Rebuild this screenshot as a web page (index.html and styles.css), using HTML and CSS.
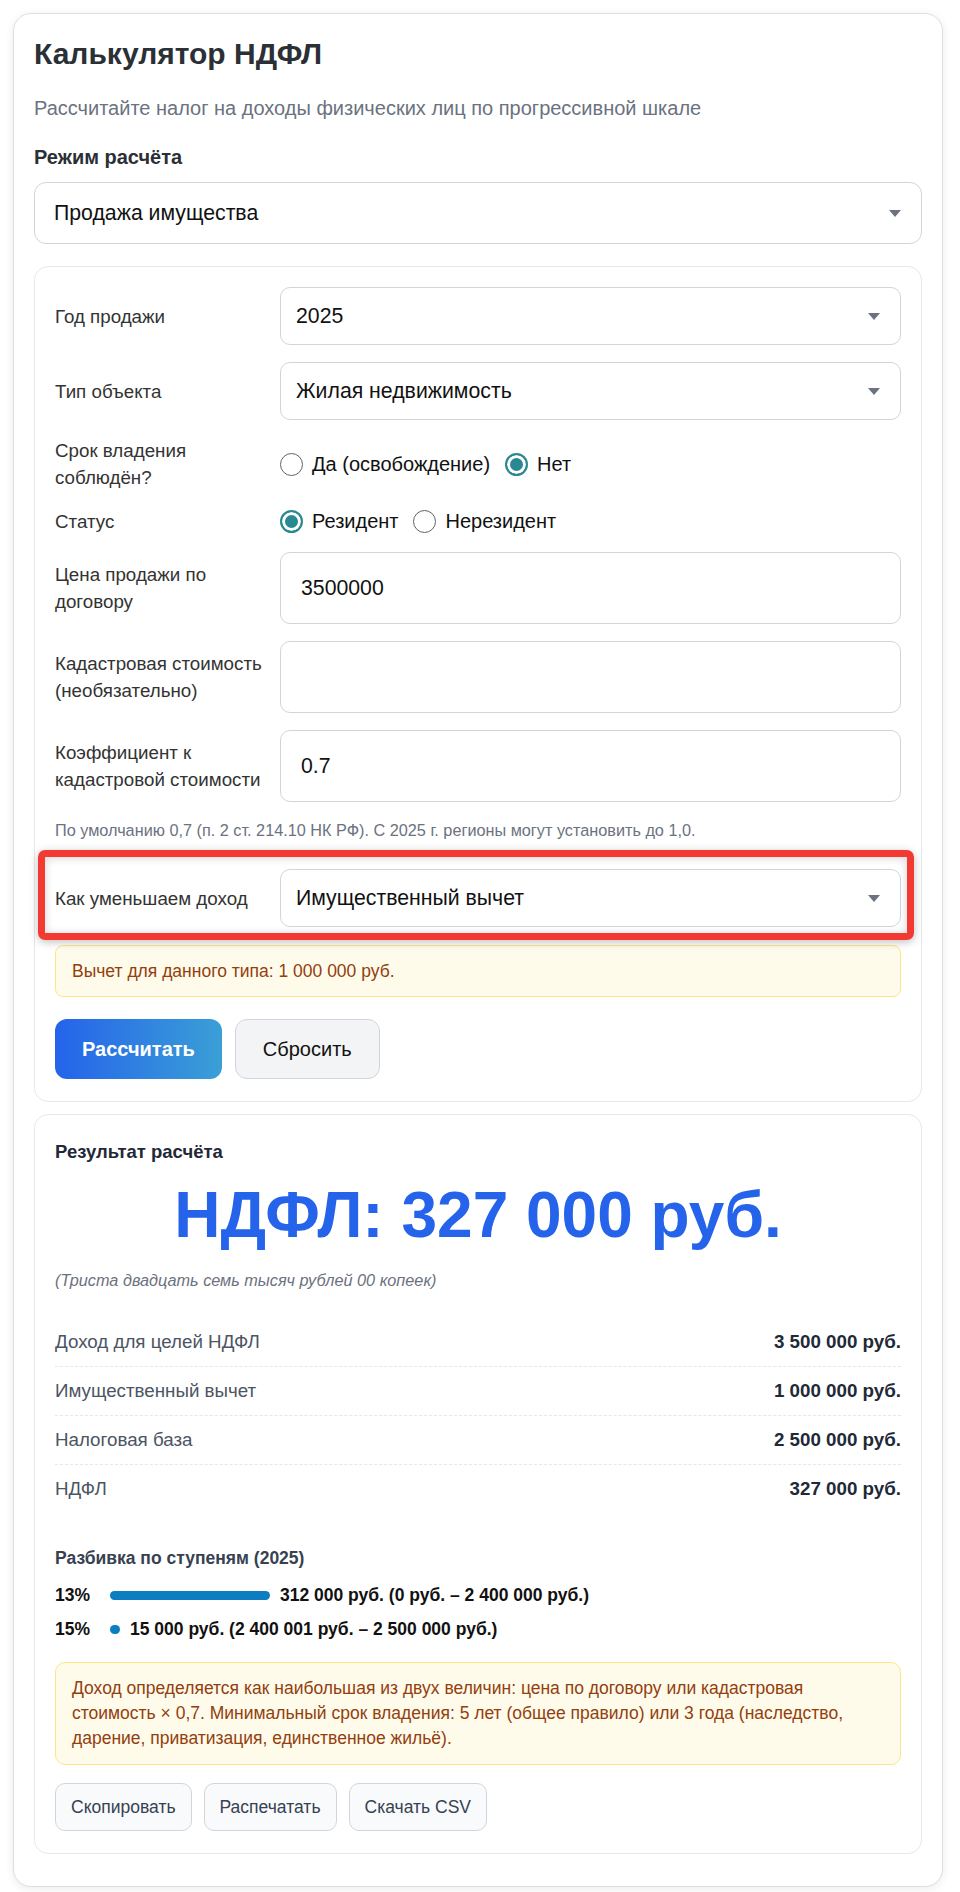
FILE: index.html
```html
<!DOCTYPE html>
<html lang="ru">
<head>
    <meta charset="UTF-8">
    <meta name="viewport" content="width=device-width, initial-scale=1.0">
    <title>Калькулятор НДФЛ</title>
    <link rel="stylesheet" href="styles.css">
</head>
<body>
    <div class="calculator">
        <h1>Калькулятор НДФЛ</h1>
        <p class="subtitle">Рассчитайте налог на доходы физических лиц по прогрессивной шкале</p>

        <div class="mode-label">Режим расчёта</div>
        <div class="select-wrap select-wrap-main">
            <select class="select-main" aria-label="Режим расчёта">
                <option>Продажа имущества</option>
            </select>
        </div>

        <form class="panel form-panel">
            <div class="fields">
                <div class="form-row">
                    <label class="field-label">Год продажи</label>
                    <div class="select-wrap">
                        <select><option>2025</option></select>
                    </div>
                </div>
                <div class="form-row">
                    <label class="field-label">Тип объекта</label>
                    <div class="select-wrap">
                        <select><option>Жилая недвижимость</option></select>
                    </div>
                </div>
                <div class="form-row">
                    <span class="field-label">Срок владения соблюдён?</span>
                    <div class="radio-group">
                        <label class="radio"><input type="radio" name="term"><span>Да (освобождение)</span></label>
                        <label class="radio"><input type="radio" name="term" checked><span>Нет</span></label>
                    </div>
                </div>
                <div class="form-row">
                    <span class="field-label">Статус</span>
                    <div class="radio-group">
                        <label class="radio"><input type="radio" name="status" checked><span>Резидент</span></label>
                        <label class="radio"><input type="radio" name="status"><span>Нерезидент</span></label>
                    </div>
                </div>
                <div class="form-row">
                    <label class="field-label">Цена продажи по договору</label>
                    <input class="text-input" type="text" value="3500000">
                </div>
                <div class="form-row">
                    <label class="field-label">Кадастровая стоимость (необязательно)</label>
                    <input class="text-input" type="text" value="">
                </div>
                <div class="form-row">
                    <label class="field-label">Коэффициент к кадастровой стоимости</label>
                    <input class="text-input" type="text" value="0.7">
                </div>
                <p class="hint">По умолчанию 0,7 (п. 2 ст. 214.10 НК РФ). С 2025 г. регионы могут установить до 1,0.</p>
                <div class="form-row row-highlight">
                    <label class="field-label">Как уменьшаем доход</label>
                    <div class="select-wrap">
                        <select><option>Имущественный вычет</option></select>
                    </div>
                </div>
            </div>

            <div class="notice notice-small">Вычет для данного типа: 1 000 000 руб.</div>

            <div class="form-buttons">
                <button type="button" class="btn btn-primary">Рассчитать</button>
                <button type="button" class="btn btn-secondary">Сбросить</button>
            </div>
        </form>

        <div class="panel result-panel">
            <h2>Результат расчёта</h2>
            <div class="tax-total">НДФЛ: 327 000 руб.</div>
            <div class="in-words">(Триста двадцать семь тысяч рублей 00 копеек)</div>

            <div class="summary">
                <div class="summary-row"><span>Доход для целей НДФЛ</span><b>3 500 000 руб.</b></div>
                <div class="summary-row"><span>Имущественный вычет</span><b>1 000 000 руб.</b></div>
                <div class="summary-row"><span>Налоговая база</span><b>2 500 000 руб.</b></div>
                <div class="summary-row"><span>НДФЛ</span><b>327 000 руб.</b></div>
            </div>

            <h3>Разбивка по ступеням (2025)</h3>
            <div class="tiers">
                <div class="tier">
                    <span class="tier-rate">13%</span>
                    <span class="tier-bar" style="width: 160px"></span>
                    <span>312 000 руб. (0 руб. – 2 400 000 руб.)</span>
                </div>
                <div class="tier">
                    <span class="tier-rate">15%</span>
                    <span class="tier-bar" style="width: 10px"></span>
                    <span>15 000 руб. (2 400 001 руб. – 2 500 000 руб.)</span>
                </div>
            </div>

            <div class="notice notice-note">Доход определяется как наибольшая из двух величин: цена по договору или кадастровая стоимость × 0,7. Минимальный срок владения: 5 лет (общее правило) или 3 года (наследство, дарение, приватизация, единственное жильё).</div>

            <div class="actions">
                <button type="button" class="btn-small">Скопировать</button>
                <button type="button" class="btn-small">Распечатать</button>
                <button type="button" class="btn-small">Скачать CSV</button>
            </div>
        </div>
    </div>
</body>
</html>
```

FILE: styles.css
```css
* {
    box-sizing: border-box;
}

body {
    margin: 0;
    background: #fff;
    font-family: "Liberation Sans", Arial, sans-serif;
    color: #1f2937;
}

.calculator {
    margin: 13px 17px 7px 13px;
    padding: 20px 20px 32px;
    background: #fff;
    border: 1px solid #dcdfe4;
    border-radius: 18px;
    box-shadow: 0 2px 10px rgba(0, 0, 0, 0.08);
}

h1 {
    margin: 2px 0 0;
    font-size: 30px;
    line-height: 36px;
    color: #2b2f36;
}

.subtitle {
    margin: 23px 0 0;
    font-size: 20px;
    line-height: 27px;
    color: #6b7280;
}

.mode-label {
    margin-top: 22px;
    font-size: 20px;
    line-height: 26px;
    font-weight: bold;
    color: #2b2f36;
}

/* selects */
.select-wrap {
    position: relative;
}

.select-wrap::after {
    content: "";
    position: absolute;
    right: 21px;
    top: 50%;
    margin-top: -3px;
    border-left: 6.5px solid transparent;
    border-right: 6.5px solid transparent;
    border-top: 7px solid #6b7280;
    pointer-events: none;
}

select {
    display: block;
    width: 100%;
    height: 58px;
    padding: 0 44px 0 15px;
    font-family: inherit;
    font-size: 21.25px;
    color: #111;
    background: #fff;
    border: 1px solid #d1d5db;
    border-radius: 10px;
    appearance: none;
    -webkit-appearance: none;
}

.select-wrap-main {
    margin-top: 12px;
}

.select-main {
    height: 62px;
    padding-left: 19px;
    border-radius: 12px;
}

/* panels */
.panel {
    background: #fff;
    border: 1px solid #e5e7eb;
    border-radius: 14px;
    padding: 20px;
}

.form-panel {
    margin-top: 22px;
    padding-bottom: 22px;
}

.fields {
    display: flex;
    flex-direction: column;
    gap: 17px;
}

.form-row {
    display: grid;
    grid-template-columns: 210px 1fr;
    column-gap: 15px;
    align-items: center;
}

.field-label {
    font-size: 18.75px;
    line-height: 27px;
    color: #333;
}

.text-input {
    width: 100%;
    height: 72px;
    padding: 0 20px;
    font-family: inherit;
    font-size: 21.25px;
    color: #111;
    border: 1px solid #d1d5db;
    border-radius: 10px;
}

.radio-group {
    display: flex;
    align-items: center;
    gap: 15px;
}

.radio {
    display: inline-flex;
    align-items: center;
    gap: 9px;
    font-size: 20px;
    color: #111;
}

.radio input {
    appearance: none;
    -webkit-appearance: none;
    margin: 0;
    width: 23px;
    height: 23px;
    border: 1.5px solid #5f6368;
    border-radius: 50%;
    background: #fff;
}

.radio input:checked {
    border: 2px solid #2a8893;
    background: #2a8893;
    box-shadow: inset 0 0 0 3px #fff;
}

.hint {
    margin: 0;
    font-size: 16.25px;
    line-height: 22px;
    color: #6b7280;
}

.row-highlight {
    position: relative;
    padding-top: 11px;
}

.row-highlight::after {
    content: "";
    position: absolute;
    top: -8px;
    bottom: -13px;
    left: -17px;
    right: -13px;
    border: 7px solid #f33a32;
    border-radius: 7px;
    box-shadow: 0 2px 8px rgba(0, 0, 0, 0.25), inset 0 1px 8px rgba(0, 0, 0, 0.18);
    pointer-events: none;
}

.notice {
    background: #fffbeb;
    border: 1px solid #fde68a;
    color: #92400e;
    font-size: 17.5px;
}

.notice-small {
    margin-top: 18px;
    padding: 14px 16px;
    line-height: 22px;
    border-radius: 8px;
}

.form-buttons {
    display: flex;
    gap: 13px;
    margin-top: 22px;
}

.btn {
    height: 60px;
    padding: 0 27px;
    font-family: inherit;
    font-size: 20px;
    border-radius: 12px;
    cursor: pointer;
}

.btn-primary {
    color: #fff;
    font-weight: bold;
    border: none;
    background: linear-gradient(90deg, #2563eb, #3a9fd6);
}

.btn-secondary {
    color: #111;
    background: #f3f4f6;
    border: 1px solid #d1d5db;
}

/* result */
.result-panel {
    margin-top: 12px;
    padding-bottom: 22px;
}

h2 {
    margin: 4px 0 0;
    font-size: 18.5px;
    line-height: 26px;
    color: #1f2937;
}

.tax-total {
    margin-top: 12px;
    font-size: 64px;
    line-height: 77px;
    font-weight: bold;
    text-align: center;
    color: #2563eb;
}

.in-words {
    margin-top: 14px;
    font-size: 16.25px;
    line-height: 24px;
    font-style: italic;
    color: #6b7280;
}

.summary {
    margin-top: 26px;
}

.summary-row {
    display: flex;
    justify-content: space-between;
    padding: 12px 0;
    font-size: 18.75px;
    line-height: 24px;
    color: #4b5563;
    border-bottom: 1px dashed #e5e7eb;
}

.summary-row:last-child {
    border-bottom: none;
}

.summary-row b {
    color: #1f2937;
}

h3 {
    margin: 33px 0 0;
    font-size: 17.5px;
    line-height: 24px;
    color: #374151;
}

.tiers {
    display: flex;
    flex-direction: column;
    gap: 10px;
    margin-top: 13px;
}

.tier {
    display: flex;
    align-items: center;
    font-size: 17.5px;
    line-height: 24px;
    font-weight: bold;
    color: #111;
}

.tier-rate {
    width: 55px;
}

.tier-bar {
    height: 9px;
    margin-right: 10px;
    border-radius: 5px;
    background: #0b7dc0;
}

.notice-note {
    margin-top: 21px;
    padding: 13px 16px;
    line-height: 25px;
    border-radius: 10px;
}

.actions {
    display: flex;
    gap: 12px;
    margin-top: 18px;
}

.btn-small {
    height: 48px;
    padding: 0 15px;
    font-family: inherit;
    font-size: 17.5px;
    color: #374151;
    background: #f8fafc;
    border: 1px solid #d1d5db;
    border-radius: 10px;
    cursor: pointer;
}
```
